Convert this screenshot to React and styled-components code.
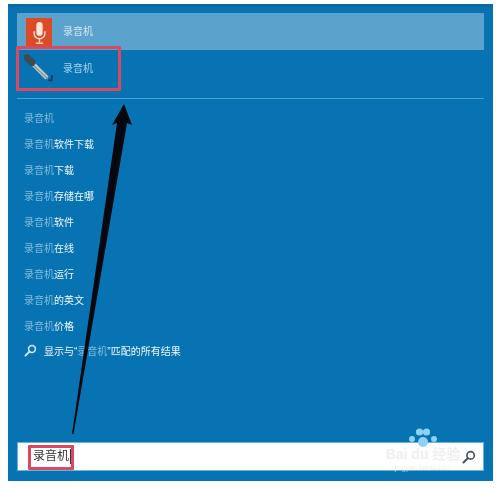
import React from 'react'
import styled, { createGlobalStyle } from 'styled-components'

const Global = createGlobalStyle`
  html, body { margin: 0; padding: 0; background: #fff; }
  body { font-family: "Liberation Sans", "Noto Sans CJK SC", sans-serif; }
`

const Page = styled.div`
  position: relative;
  width: 500px;
  height: 488px;
  padding: 4px 7px 7px 8px;
  box-sizing: border-box;
  overflow: hidden;
  filter: blur(0.5px);
`
const Panel = styled.div`
  height: 100%;
  box-sizing: border-box;
  padding: 6px 9px 10px;
  display: flex;
  flex-direction: column;
  background: #0773b2;
  border-top: 3px solid #0a6aa3;
`
const TopRow = styled.div`
  height: 37px;
  display: flex;
  align-items: flex-start;
  background: #5ba3cc;
  padding-left: 9px;
`
const MicTile = styled.div`
  width: 26px;
  height: 29px;
  margin-top: 5px;
  flex-shrink: 0;
  display: flex;
  align-items: center;
  justify-content: center;
  background: #dd4a26;
`
const AppName = styled.span`
  font-size: 10px;
  line-height: 12px;
  color: #cfe6f3;
  margin-left: 11px;
  margin-top: 13px;
`
const AppRow = styled.div`
  height: 44px;
  display: flex;
  align-items: center;
  padding: 0 0 6px 7px;
  box-sizing: border-box;
  ${AppName} { color: #a9d3ea; margin: 0 0 0 9px; }
`
const Divider = styled.div`
  height: 1px;
  margin-top: 4px;
  background: #4f9fcd;
`
const Suggestions = styled.ul`
  list-style: none;
  margin: 5px 0 0;
  padding: 0 0 0 7px;
  display: flex;
  flex-direction: column;
`
const Suggestion = styled.li`
  height: 26px;
  display: flex;
  align-items: center;
  font-size: 10px;
  color: #f2f8fc;
  white-space: nowrap;
`
const Query = styled.span`
  color: #7fbcdd;
`
const AllResults = styled(Suggestion)`
  gap: 7px;
  height: 25px;
`
const SearchBar = styled.div`
  margin-top: auto;
  height: 29px;
  box-sizing: border-box;
  display: flex;
  align-items: center;
  justify-content: space-between;
  padding: 0 7px 0 15px;
  background: #fff;
  border: 1px solid #6ab4dd;
`
const SearchText = styled.span`
  font-size: 12px;
  line-height: 15px;
  color: #333;
  border-right: 1px solid #333;
  padding-right: 1px;
`
const Callout = styled.div`
  position: absolute;
  box-sizing: border-box;
  border: 3px solid #d94a5f;
  border-radius: 1px;
  left: ${p => p.$x}px;
  top: ${p => p.$y}px;
  width: ${p => p.$w}px;
  height: ${p => p.$h}px;
`
const ArrowLayer = styled.svg`
  position: absolute;
  left: 0;
  top: 0;
  pointer-events: none;
`
const Watermark = styled.div`
  position: absolute;
  left: 381px;
  top: 428px;
  width: 84px;
  display: flex;
  flex-direction: column;
  align-items: center;
  color: rgba(232, 232, 232, 0.7);
`
const WatermarkName = styled.span`
  font-size: 14px;
  line-height: 14px;
  font-weight: bold;
  margin-top: -1px;
`
const WatermarkUrl = styled.span`
  font-size: 7px;
  line-height: 9px;
  margin-top: 2px;
`

const MagnifierIcon = ({ color, size }) => (
  <svg width={size} height={size} viewBox="0 0 14 14" fill="none">
    <circle cx="8.6" cy="5.4" r="3.7" stroke={color} strokeWidth="1.7" />
    <path d="M5.8 8.2 1.5 12.5" stroke={color} strokeWidth="2" strokeLinecap="round" />
  </svg>
)

const MicIcon = () => (
  <svg width="13" height="24" viewBox="0 0 14 26" fill="none">
    <rect x="3.6" y="1" width="6.8" height="15" rx="3.4" fill="#fbe6dc" />
    <path d="M1.2 11v2.5a5.8 5.8 0 0 0 11.6 0V11M7 19.5V23M3 24h8" stroke="#fbe6dc" strokeWidth="1.5" />
  </svg>
)

const MicrophoneArt = () => (
  <svg width="30" height="30" viewBox="0 0 30 30" fill="none">
    <path d="M7 8 23 24" stroke="#c8c9c4" strokeWidth="4.4" />
    <path d="M9 11 24 25" stroke="#7f95a3" strokeWidth="1.2" />
    <path d="M3 3.5 8 8.5" stroke="#3f4a55" strokeWidth="7" strokeLinecap="round" />
    <path d="M24 26 28 27M27.5 27 28 21" stroke="#183a55" strokeWidth="1.8" />
  </svg>
)

const Arrow = () => (
  <ArrowLayer width="500" height="488" viewBox="0 0 500 488">
    <path d="M124 104 132 125 127 123 73.5 434 72 434 117 123 112 125Z" fill="#05080f" />
  </ArrowLayer>
)

const paw = [[-3.5, 4, 3.6], [3.5, 4, 3.6], [-11, 11, 3], [11, 11, 3], [0, 14, 5]]

const suggestions = ['', '软件下载', '下载', '存储在哪', '软件', '在线', '运行', '的英文', '价格']

const App = () => {
  return (
    <Page>
      <Global />
      <Panel>
        <TopRow>
          <MicTile><MicIcon /></MicTile>
          <AppName>录音机</AppName>
        </TopRow>
        <AppRow>
          <MicrophoneArt />
          <AppName>录音机</AppName>
        </AppRow>
        <Divider />
        <Suggestions>
          {suggestions.map(s => (
            <Suggestion key={s}><Query>录音机</Query>{s}</Suggestion>
          ))}
          <AllResults>
            <MagnifierIcon color="#d5ebf7" size={13} />
            <span>显示与“<Query>录音机</Query>”匹配的所有结果</span>
          </AllResults>
        </Suggestions>
        <SearchBar>
          <SearchText>录音机</SearchText>
          <MagnifierIcon color="#44525c" size={14} />
        </SearchBar>
      </Panel>
      <Callout $x={16} $y={46} $w={105} $h={45} />
      <Callout $x={28} $y={445} $w={46} $h={25} />
      <Arrow />
      <Watermark>
        <svg width="30" height="20" viewBox="-15 0 30 20" fill="#8fd0f5">
          {paw.map(([x, y, r]) => <circle key={x} cx={x} cy={y} r={r} />)}
        </svg>
        <WatermarkName>Bai du 经验</WatermarkName>
        <WatermarkUrl>jingyan.baidu.com</WatermarkUrl>
      </Watermark>
    </Page>
  )
}

export default App
